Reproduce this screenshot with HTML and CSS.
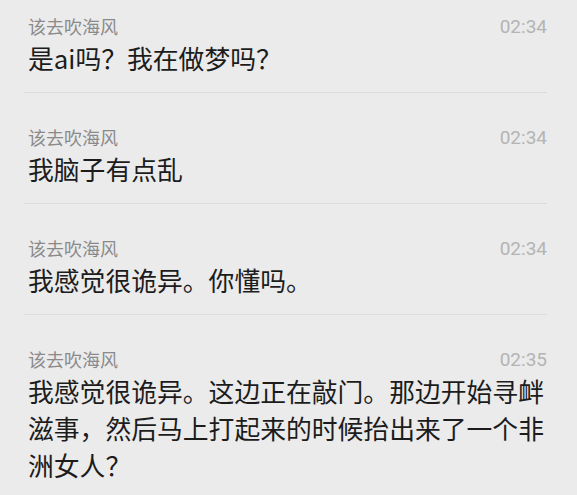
FILE: index.html
```html
<!DOCTYPE html>
<html>
<head>
    <title>聊天记录</title>
    <link rel="stylesheet" href="styles.css">
</head>
<body>
    <div class="chat-list">
        <div class="msg">
            <div class="msg-head">
                <span class="msg-name">该去吹海风</span>
                <span class="msg-time">02:34</span>
            </div>
            <div class="msg-text">是ai吗？我在做梦吗？</div>
        </div>

        <div class="msg">
            <div class="msg-head">
                <span class="msg-name">该去吹海风</span>
                <span class="msg-time">02:34</span>
            </div>
            <div class="msg-text">我脑子有点乱</div>
        </div>

        <div class="msg">
            <div class="msg-head">
                <span class="msg-name">该去吹海风</span>
                <span class="msg-time">02:34</span>
            </div>
            <div class="msg-text">我感觉很诡异。你懂吗。</div>
        </div>

        <div class="msg">
            <div class="msg-head">
                <span class="msg-name">该去吹海风</span>
                <span class="msg-time">02:35</span>
            </div>
            <div class="msg-text">我感觉很诡异。这边正在敲门。那边开始寻衅滋事，然后马上打起来的时候抬出来了一个非洲女人？</div>
        </div>
    </div>
</body>
</html>
```

FILE: styles.css
```css
body {
    margin: 0;
    background: #ebebeb;
    font-family: "Noto Sans CJK SC", "Noto Sans", sans-serif;
}
.chat-list {
    display: flex;
    flex-direction: column;
}
.msg {
    margin: 0 30px 0 24px;
    padding: 31px 0 16px 4px;
    border-bottom: 1px solid #dcdcdc;
}
.msg:first-child {
    padding-top: 13px;
}
.msg:last-child {
    border-bottom: none;
}
.msg-head {
    display: flex;
    justify-content: space-between;
    align-items: center;
    height: 26px;
}
.msg-name {
    font-size: 18px;
    color: #8a8a8a;
}
.msg-time {
    font-family: Roboto, "Liberation Sans", sans-serif;
    font-size: 19px;
    color: #b4b4b4;
}
.msg-text {
    font-size: 25.8px;
    line-height: 37px;
    color: #1c1c1c;
}
```
